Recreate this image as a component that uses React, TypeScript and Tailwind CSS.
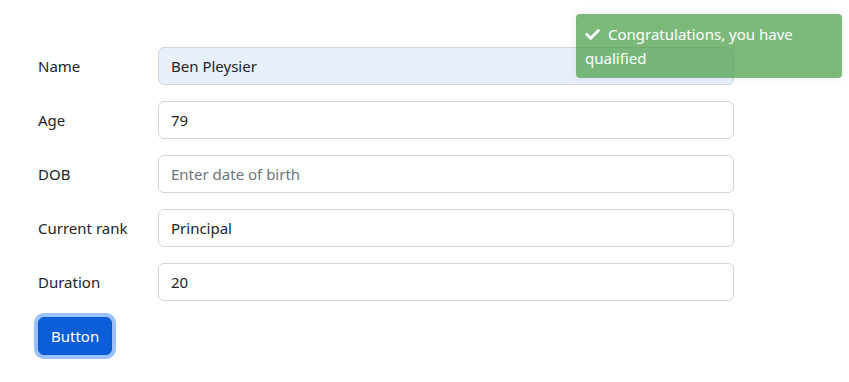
import React from "react";
import { FaCheck } from "react-icons/fa";

const rows: { label: string; value?: string; placeholder?: string; autofill?: boolean }[] = [
  { label: "Name", value: "Ben Pleysier", autofill: true },
  { label: "Age", value: "79" },
  { label: "DOB", placeholder: "Enter date of birth" },
  { label: "Current rank", value: "Principal" },
  { label: "Duration", value: "20" },
];

export default function App() {
  return (
    <div
      className="relative w-[849px] h-[382px] bg-white text-[#212529] text-[15px]"
      style={{ fontFamily: '"Segoe UI", "Noto Sans", "Open Sans", sans-serif' }}
    >
      <div className="pl-[38px] pt-[47px] flex flex-col gap-4">
        {rows.map((r) => (
          <div key={r.label} className="flex items-center">
            <label className="w-[120px] leading-6">{r.label}</label>
            <input
              readOnly
              defaultValue={r.value}
              placeholder={r.placeholder}
              className={`w-[576px] h-[38px] px-3 border border-[#ced4da] rounded-[6px] outline-none text-[#212529] placeholder:text-[#6c757d] ${
                r.autofill ? "bg-[#e8f0fe]" : "bg-white"
              }`}
            />
          </div>
        ))}
        <div>
          <button className="h-[38px] px-3 rounded-[6px] bg-[#0b5ed7] border border-[#0a58ca] text-white ring-4 ring-[#98c1fe]">
            Button
          </button>
        </div>
      </div>
      <div className="absolute left-[576px] top-[14px] w-[266px] h-[64px] rounded-[4px] bg-[#51a351]/[0.76] text-white px-[9px] py-2 leading-6 shadow-[0_0_10px_rgba(0,0,0,0.08)]">
        <FaCheck className="inline-block w-[15px] h-[15px] mr-[8px] -mt-[3px]" />
        Congratulations, you have qualified
      </div>
    </div>
  );
}
